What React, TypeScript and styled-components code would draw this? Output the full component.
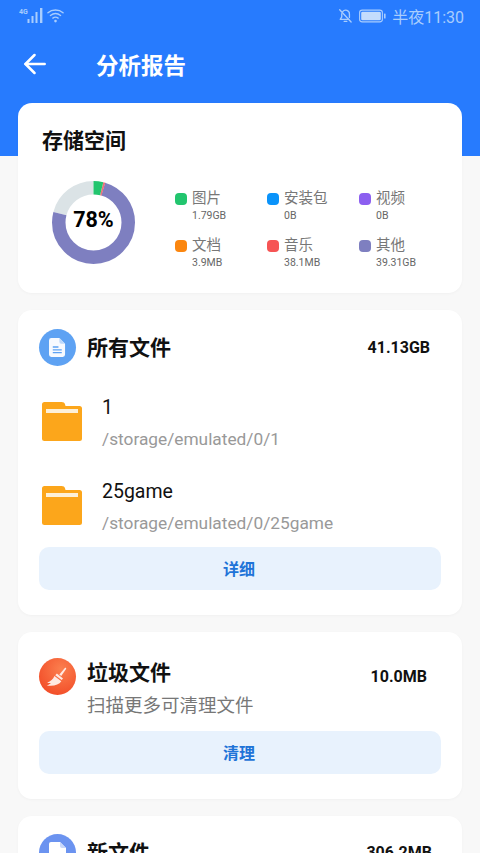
import React from "react";
import styled, { createGlobalStyle } from "styled-components";

const Reset = createGlobalStyle`
  html, body {
    margin: 0;
    padding: 0;
    background: #f8f8f8;
  }
  * {
    box-sizing: border-box;
  }
`;

const Page = styled.div`
  width: 480px;
  height: 853px;
  overflow: hidden;
  background: linear-gradient(#277bfe 156px, #f8f8f8 156px);
  font-family: Roboto, "Noto Sans CJK SC", sans-serif;
`;

const StatusBar = styled.div`
  height: 31px;
  padding: 0 16px 0 19px;
  display: flex;
  align-items: center;
  justify-content: space-between;
  color: #a9cdfd;
`;

const StatusGroup = styled.div<{ $gap: number }>`
  display: flex;
  align-items: center;
  gap: ${(p) => p.$gap}px;
`;

const Clock = styled.span`
  font-size: 16px;
`;

const NavBar = styled.div`
  height: 72px;
  padding: 0 0 7px 24px;
  display: flex;
  align-items: center;
  gap: 51px;
`;

const NavTitle = styled.h1`
  margin: 0 0 0 -1px;
  font-size: 22.5px;
  font-weight: 700;
  color: #fff;
`;

const Cards = styled.div`
  display: flex;
  flex-direction: column;
  gap: 17px;
  padding: 0 18px;
`;

const Card = styled.section<{ $height: number }>`
  height: ${(p) => p.$height}px;
  padding: 0 21px;
  background: #fff;
  border-radius: 14px;
  box-shadow: 0 1px 3px rgba(0, 0, 0, 0.03);
`;

const StorageCard = styled(Card)`
  padding: 25px 0 0 24px;
`;

const StorageTitle = styled.h2`
  margin: 0;
  font-size: 21px;
  line-height: 27px;
  font-weight: 700;
  color: #111;
`;

const StorageBody = styled.div`
  margin-top: 26px;
  display: flex;
  align-items: flex-start;
`;

const Donut = styled.div`
  position: relative;
  width: 83px;
  height: 83px;
  margin-left: 10px;
  flex: none;
`;

const DonutLabel = styled.div`
  position: absolute;
  inset: 0 0 7px;
  display: flex;
  align-items: center;
  justify-content: center;
  font-size: 21.5px;
  font-weight: 700;
  color: #000;
`;

const Legend = styled.div`
  margin: 8px 0 0 40px;
  display: grid;
  grid-template-columns: repeat(3, 92px);
  grid-auto-rows: 47px;
`;

const LegendItem = styled.div`
  display: grid;
  grid-template-columns: 12px 1fr;
  column-gap: 5px;
  align-content: start;
  align-items: center;
`;

const LegendDot = styled.span<{ $color: string }>`
  width: 12px;
  height: 12px;
  border-radius: 4px;
  background: ${(p) => p.$color};
`;

const LegendName = styled.span`
  font-size: 14.5px;
  line-height: 20px;
  color: #777;
`;

const LegendSize = styled.span`
  grid-column: 2;
  font-size: 10.5px;
  line-height: 14px;
  color: #666;
`;

const CardHeader = styled.div<{ $top: number }>`
  padding-top: ${(p) => p.$top}px;
  display: flex;
  align-items: center;
  gap: 11px;
  height: ${(p) => p.$top + 37}px;
`;

const RoundIcon = styled.div<{ $bg: string }>`
  width: 37px;
  height: 37px;
  border-radius: 50%;
  flex: none;
  display: flex;
  align-items: center;
  justify-content: center;
  background: ${(p) => p.$bg};
`;

const CardTitle = styled.h3<{ $lift?: number }>`
  margin: 0 0 ${(p) => p.$lift ?? 0}px;
  flex: 1;
  font-size: 21px;
  line-height: 28px;
  font-weight: 700;
  color: #111;
`;

const CardSize = styled.span<{ $right: number }>`
  margin-right: ${(p) => p.$right}px;
  font-size: 16px;
  font-weight: 700;
  color: #111;
`;

const CardNote = styled.div`
  margin: -2px 0 0 48px;
  font-size: 18.5px;
  line-height: 26px;
  color: #777;
`;

const FolderList = styled.div`
  margin: 36px 0 0 3px;
  display: flex;
  flex-direction: column;
  gap: 45px;
`;

const FolderRow = styled.div`
  height: 39px;
  display: flex;
  align-items: center;
  gap: 20px;
`;

const FolderTitle = styled.div`
  padding-top: 1px;
  font-size: 19.5px;
  line-height: 28px;
  color: #111;
`;

const FolderPath = styled.div`
  margin-top: 5px;
  font-size: 17.3px;
  line-height: 24px;
  color: #999;
`;

const ActionButton = styled.button<{ $top: number }>`
  display: block;
  width: 100%;
  height: 43px;
  margin-top: ${(p) => p.$top}px;
  padding: 0 2px 2px 0;
  border: 0;
  border-radius: 10px;
  background: #e8f2fd;
  color: #1f74d8;
  font-family: inherit;
  font-size: 16px;
  font-weight: 700;
`;

const segments = [
  { color: "#dbe3e6", from: 0.79, to: 1 },
  { color: "#7e7fc0", from: 0.045, to: 0.79 },
  { color: "#ef6f7a", from: 0.038, to: 0.046 },
  { color: "#22c56e", from: 0, to: 0.038 },
];

const legend = [
  { name: "图片", size: "1.79GB", color: "#22c56e" },
  { name: "安装包", size: "0B", color: "#0a93fa" },
  { name: "视频", size: "0B", color: "#8c5ff0" },
  { name: "文档", size: "3.9MB", color: "#fb860f" },
  { name: "音乐", size: "38.1MB", color: "#f65454" },
  { name: "其他", size: "39.31GB", color: "#7e7fc0" },
];

const folders = [
  { name: "1", path: "/storage/emulated/0/1" },
  { name: "25game", path: "/storage/emulated/0/25game" },
];

const Signal = () => (
  <svg width="24" height="18" viewBox="0 0 24 18" fill="#a9cdfd">
    <text x="0" y="6.500" fontSize="7" fontWeight="700" fontFamily="Roboto">4G</text>
    <rect x="8.500" y="12" width="2" height="4" />
    <rect x="12.500" y="9" width="2" height="7" />
    <rect x="16.500" y="5" width="2" height="11" />
    <rect x="21" y="1" width="2.400" height="15" />
  </svg>
);

const Wifi = () => (
  <svg width="17" height="16" viewBox="0 0 18 16" fill="none" stroke="#a9cdfd" strokeWidth="1.5" strokeLinecap="round">
    <path d="M1 4.500C5.500.8 12.500.8 17 4.500" />
    <path d="M3.600 7.400c3.200-2.500 7.600-2.500 10.800 0" />
    <path d="M6.200 10.200c1.700-1.200 3.900-1.200 5.600 0" />
    <circle cx="9" cy="13.400" r="1.400" fill="#a9cdfd" stroke="none" />
  </svg>
);

const MutedBell = () => (
  <svg width="15" height="16" viewBox="0 0 16 16" fill="none" stroke="#a9cdfd" strokeWidth="1.4" strokeLinecap="round" strokeLinejoin="round">
    <path d="M5 3.400A4 4 0 0 1 12.200 6v3.600" />
    <path d="M4 5.600V9l-1.600 2.600h9" />
    <path d="M6.600 13.800h2.800" />
    <path d="M1.800 1.400l12.200 13" />
  </svg>
);

const Battery = () => (
  <svg width="27" height="14" viewBox="0 0 27 14">
    <rect x="0.600" y="1.100" width="22.800" height="11.800" rx="2.600" fill="none" stroke="#a9cdfd" strokeWidth="1.100" />
    <rect x="2.200" y="2.700" width="19.600" height="8.600" rx="1.400" fill="#c4dcfc" />
    <rect x="25" y="4.500" width="1.600" height="5" rx="0.600" fill="#a9cdfd" />
  </svg>
);

const BackArrow = () => (
  <svg width="22" height="22" viewBox="0 0 22 22" fill="none" stroke="#fff" strokeWidth="2.500" strokeLinecap="round" strokeLinejoin="round">
    <path d="M20.700 11H1.500" />
    <path d="M10.500 2l-9 9 9 9" />
  </svg>
);

const DocIcon = () => (
  <svg width="17" height="19" viewBox="0 0 18 20">
    <path d="M2.500 0H11l6 6v11.500a2.500 2.500 0 0 1-2.500 2.500h-12A2.500 2.500 0 0 1 0 17.500v-15A2.500 2.500 0 0 1 2.500 0z" fill="#fff" opacity="0.95" />
    <path d="M11 0l6 6h-4a2 2 0 0 1-2-2z" fill="#bcd8fb" />
    <path d="M4 9.500h6M4 12.500h9.500M4 15.500h9.500" stroke="#5ea2f3" strokeWidth="1.400" />
  </svg>
);

const BroomIcon = () => (
  <svg width="23" height="20" viewBox="0 0 30 26" fill="#ffe9e2">
    <path d="M17.400 9.600l7.200-8.200c.8-.9 2.300.3 1.600 1.300l-6.300 8.900z" />
    <path d="M14.200 8.400l8 6.400-1.700 2.200-8.400-6.400z" />
    <path d="M11 11.600l9 6.800C17 23 10 25.400 1 24c2.600-.8 4.500-2 5.200-3.200-1.700.3-3.300.2-4.700-.4C6 18.600 9.400 15.600 11 11.600z" />
  </svg>
);

const NewFileIcon = () => (
  <svg width="20" height="22" viewBox="0 0 20 22">
    <path d="M3 0h9l6 6v13a3 3 0 0 1-3 3H4a3 3 0 0 1-3-3V2a2 2 0 0 1 2-2z" fill="#fff" />
    <path d="M12 0l6 6h-4a2 2 0 0 1-2-2z" fill="#c9d8fa" />
    <path d="M5 12h9M5 16h9" stroke="#6b93f0" strokeWidth="2" />
  </svg>
);

const Folder = () => (
  <svg width="40" height="39" viewBox="0 0 40 39" style={{ flex: "none" }}>
    <path d="M2.500 0h17c2 0 3 .8 3.600 2.400L23.500 4H37.500A2.500 2.500 0 0 1 40 6.500v30a2.500 2.500 0 0 1-2.500 2.500h-35A2.500 2.500 0 0 1 0 36.500v-34A2.500 2.500 0 0 1 2.500 0z" fill="#fca61b" />
    <rect x="4" y="7" width="32" height="4" fill="#fdf0d8" />
  </svg>
);

export default function App() {
  const radius = 34.75;
  const circumference = 2 * Math.PI * radius;

  return (
    <Page>
      <Reset />
      <StatusBar>
        <StatusGroup $gap={4}>
          <Signal />
          <Wifi />
        </StatusGroup>
        <StatusGroup $gap={6}>
          <MutedBell />
          <Battery />
          <Clock>半夜11:30</Clock>
        </StatusGroup>
      </StatusBar>
      <NavBar>
        <BackArrow />
        <NavTitle>分析报告</NavTitle>
      </NavBar>
      <Cards>
        <StorageCard $height={190}>
          <StorageTitle>存储空间</StorageTitle>
          <StorageBody>
            <Donut>
              <svg width="83" height="83" viewBox="0 0 83 83">
                <g transform="rotate(-90 41.5 41.5)" fill="none" strokeWidth="13.500">
                  {segments.map((s) => (
                    <circle
                      key={s.color}
                      cx="41.5"
                      cy="41.5"
                      r={radius}
                      stroke={s.color}
                      strokeDasharray={`${(s.to - s.from) * circumference} ${circumference}`}
                      strokeDashoffset={-s.from * circumference}
                    />
                  ))}
                </g>
              </svg>
              <DonutLabel>78%</DonutLabel>
            </Donut>
            <Legend>
              {legend.map((item) => (
                <LegendItem key={item.name}>
                  <LegendDot $color={item.color} />
                  <LegendName>{item.name}</LegendName>
                  <LegendSize>{item.size}</LegendSize>
                </LegendItem>
              ))}
            </Legend>
          </StorageBody>
        </StorageCard>

        <Card $height={305}>
          <CardHeader $top={19}>
            <RoundIcon $bg="#5ea2f3">
              <DocIcon />
            </RoundIcon>
            <CardTitle>所有文件</CardTitle>
            <CardSize $right={11}>41.13GB</CardSize>
          </CardHeader>
          <FolderList>
            {folders.map((folder) => (
              <FolderRow key={folder.name}>
                <Folder />
                <div>
                  <FolderTitle>{folder.name}</FolderTitle>
                  <FolderPath>{folder.path}</FolderPath>
                </div>
              </FolderRow>
            ))}
          </FolderList>
          <ActionButton $top={22}>详细</ActionButton>
        </Card>

        <Card $height={167}>
          <CardHeader $top={26}>
            <RoundIcon $bg="radial-gradient(circle at 60% 30%, #fb7f4e, #f0411f)">
              <BroomIcon />
            </RoundIcon>
            <CardTitle $lift={8}>垃圾文件</CardTitle>
            <CardSize $right={14}>10.0MB</CardSize>
          </CardHeader>
          <CardNote>扫描更多可清理文件</CardNote>
          <ActionButton $top={12}>清理</ActionButton>
        </Card>

        <Card $height={167}>
          <CardHeader $top={18}>
            <RoundIcon $bg="#6b93f0">
              <NewFileIcon />
            </RoundIcon>
            <CardTitle>新文件</CardTitle>
            <CardSize $right={9}>306.2MB</CardSize>
          </CardHeader>
        </Card>
      </Cards>
    </Page>
  );
}
